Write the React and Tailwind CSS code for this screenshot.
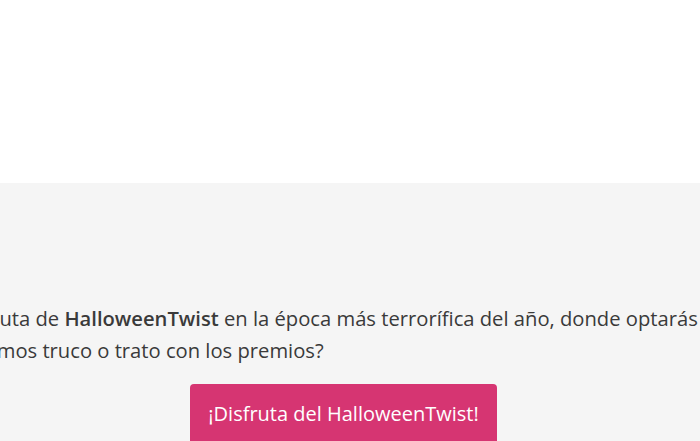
export default function App() {
    return (
        <div className="w-[700px] h-[441px] overflow-hidden bg-white" style={{ fontFamily: '"Open Sans", sans-serif' }}>
            <div className="h-[183px] bg-white" />
            <section className="bg-[#f5f5f5] h-[258px] pt-[119px]">
                <p className="text-[20.2px] leading-[32px] text-[#3a3a3a] whitespace-nowrap">
                    <span className="block ml-[-45px]">
                        Disfruta de <strong className="font-semibold">HalloweenTwist</strong> en la época más terrorífica del año, donde optarás a premios increíbles.
                    </span>
                    <span className="block ml-[-52px]">¿Jugamos truco o trato con los premios?</span>
                </p>
                <div className="mt-[18px] ml-[190px]">
                    <button
                        type="button"
                        className="w-[307px] h-[64px] rounded-[4px] bg-[#d63572] text-white text-[20px] pb-[5px]"
                    >
                        ¡Disfruta del HalloweenTwist!
                    </button>
                </div>
            </section>
        </div>
    );
}
